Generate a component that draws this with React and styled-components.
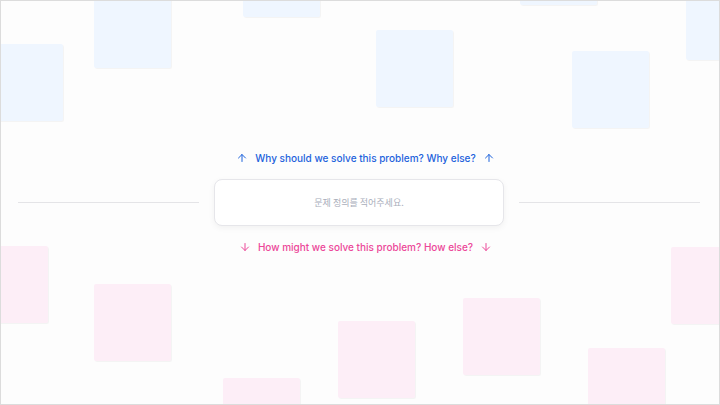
import React from 'react';
import styled, { createGlobalStyle } from 'styled-components';
import { ArrowUp, ArrowDown } from 'lucide-react';

const GlobalStyle = createGlobalStyle`
  html, body { margin: 0; padding: 0; }
  body { font-family: 'Inter', 'Noto Sans CJK KR', sans-serif; }
`;

// sticky notes scattered on the canvas (coords inside the board border)
const notes = [
  { tone: 'blue', x: -15, y: 43 },
  { tone: 'blue', x: 93, y: -10 },
  { tone: 'blue', x: 242, y: -61 },
  { tone: 'blue', x: 375, y: 29 },
  { tone: 'blue', x: 519, y: -73 },
  { tone: 'blue', x: 571, y: 50 },
  { tone: 'blue', x: 685, y: -18 },
  { tone: 'pink', x: -30, y: 245 },
  { tone: 'pink', x: 93, y: 283 },
  { tone: 'pink', x: 222, y: 377 },
  { tone: 'pink', x: 337, y: 320 },
  { tone: 'pink', x: 462, y: 297 },
  { tone: 'pink', x: 587, y: 347 },
  { tone: 'pink', x: 670, y: 246 },
];

export default function App() {
  return (
    <>
      <GlobalStyle />
      <Board>
        {notes.map((n, i) => (
          <Note key={i} $tone={n.tone} style={{ left: n.x, top: n.y }} />
        ))}
        <Center>
          <Prompt $tone="blue">
            <ArrowUp size={12} strokeWidth={2} />
            <span>Why should we solve this problem? Why else?</span>
            <ArrowUp size={12} strokeWidth={2} />
          </Prompt>
          <ProblemRow>
            <Rule />
            <ProblemCard>문제 정의를 적어주세요.</ProblemCard>
            <Rule />
          </ProblemRow>
          <Prompt $tone="pink">
            <ArrowDown size={12} strokeWidth={2} />
            <span>How might we solve this problem? How else?</span>
            <ArrowDown size={12} strokeWidth={2} />
          </Prompt>
        </Center>
      </Board>
    </>
  );
}

const Board = styled.main`
  position: relative;
  box-sizing: border-box;
  width: 720px;
  height: 405px;
  overflow: hidden;
  border: 1px solid #dcdcdc;
  background-color: #fdfdfd;
  background-image: radial-gradient(#f4f4f4 0.5px, transparent 0.7px);
  background-size: 4px 4px;
  display: flex;
  align-items: center;
  justify-content: center;
`;

const Note = styled.div`
  position: absolute;
  width: 77px;
  height: 77px;
  border-radius: 2px;
  background: ${(p) => (p.$tone === 'blue' ? '#eff6ff' : '#fdeef7')};
  box-shadow: 1px 1px 0 rgba(0, 0, 0, 0.035);
`;

const Center = styled.section`
  position: relative;
  z-index: 1;
  width: 100%;
  display: flex;
  flex-direction: column;
  align-items: center;
  gap: 14px;
`;

const Prompt = styled.div`
  display: flex;
  align-items: center;
  gap: 7px;
  height: 14px;
  padding-left: 11px;
  font-size: 10px;
  font-weight: 500;
  color: ${(p) => (p.$tone === 'blue' ? '#1d63dc' : '#ec4899')};
`;

const ProblemRow = styled.div`
  align-self: stretch;
  display: flex;
  align-items: center;
  gap: 15px;
  padding: 0 19px 0 17px;
`;

const Rule = styled.div`
  flex: 1;
  height: 1px;
  background: #e4e4e7;
`;

const ProblemCard = styled.div`
  box-sizing: border-box;
  width: 290px;
  height: 47px;
  display: flex;
  align-items: center;
  justify-content: center;
  background: #ffffff;
  border: 1px solid #e6e6ea;
  border-radius: 8px;
  box-shadow: 0 2px 6px rgba(0, 0, 0, 0.05);
  font-family: 'Noto Sans CJK KR', sans-serif;
  font-size: 9px;
  color: #a9aebb;
`;
